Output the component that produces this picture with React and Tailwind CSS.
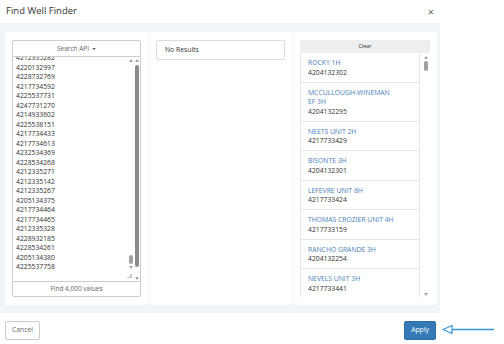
import React from "react";

const apis = [
  "4212335282",
  "4220132997",
  "4228732769",
  "4217734592",
  "4225537731",
  "4247731270",
  "4214933602",
  "4225538151",
  "4217734433",
  "4217734613",
  "4232534369",
  "4228534268",
  "4212335271",
  "4212335142",
  "4212335267",
  "4205134375",
  "4217734464",
  "4217734465",
  "4212335328",
  "4228932185",
  "4228534261",
  "4205134380",
  "4225537758",
];

const wells = [
  { name: "ROCKY 1H", api: "4204132302" },
  { name: "MCCULLOUGH-WINEMAN EF 3H", api: "4204132295" },
  { name: "NEETS UNIT 2H", api: "4217733429" },
  { name: "BISONTE 3H", api: "4204132301" },
  { name: "LEFEVRE UNIT 8H", api: "4217733424" },
  { name: "THOMAS CROZIER UNIT 4H", api: "4217733159" },
  { name: "RANCHO GRANDE 3H", api: "4204132254" },
  { name: "NEVELS UNIT 3H", api: "4217733441" },
];

const UpArrow = () => (
  <div className="w-0 h-0 border-l-[2.5px] border-r-[2.5px] border-b-[3px] border-l-transparent border-r-transparent border-b-[#a3a3a3] mx-auto" />
);
const DownArrow = () => (
  <div className="w-0 h-0 border-l-[2.5px] border-r-[2.5px] border-t-[3px] border-l-transparent border-r-transparent border-t-[#a3a3a3] mx-auto" />
);

const App = () => {
  return (
    <div className="relative w-[504px] h-[344px] bg-white font-['Open_Sans',sans-serif] text-[#333] overflow-hidden">
      {/* header */}
      <div className="w-[440px] h-[23px] flex items-center justify-between pl-[6px] pr-[6px]">
        <span className="text-[9.5px] text-[#333]">Find Well Finder</span>
        <span className="text-[11px] text-[#666] leading-none">×</span>
      </div>

      {/* body */}
      <div className="w-[440px] h-[290px] bg-[#f2f5f8] pt-[9px] pl-[5px] flex gap-[1px]">
        {/* search column */}
        <div className="w-[143px] h-[273px] bg-white rounded-[3px] px-[7px] pt-[8px] pb-[8px] flex flex-col">
          <div className="h-[17px] border border-[#ccc] rounded-t-[2px] flex items-center justify-center gap-[3px] text-[6.5px] text-[#666]">
            Search API
            <span className="w-0 h-0 border-l-[2px] border-r-[2px] border-t-[2.5px] border-l-transparent border-r-transparent border-t-[#666]" />
          </div>
          <div className="relative h-[224px] border-x border-[#ccc] overflow-hidden">
            <div className="-mt-[4px] pl-[3px] text-[6.8px] leading-[9.5px] text-[#333]">
              {apis.map((a, i) => (
                <div key={i}>{a}</div>
              ))}
            </div>
            {/* textarea scrollbar */}
            <div className="absolute right-[7px] top-[2px] w-[5px] h-[210px] flex flex-col items-center">
              <UpArrow />
              <div className="flex-1" />
              <div className="w-[4px] h-[9px] rounded-[2px] bg-[#a0a0a0] mb-[2px]" />
              <DownArrow />
            </div>
            <div className="absolute right-[8px] bottom-[3px] w-[5px] h-[5px] bg-[linear-gradient(135deg,transparent_50%,#ccc_50%)]" />
            {/* outer scrollbar */}
            <div className="absolute right-[1px] top-[2px] w-[5px] h-[221px] flex flex-col items-center">
              <UpArrow />
              <div className="w-[4px] h-[202px] rounded-[2px] bg-[#8a8a8a] mt-[3px]" />
              <div className="flex-1" />
              <DownArrow />
            </div>
          </div>
          <div className="h-[16px] border border-[#ccc] rounded-b-[2px] flex items-center justify-center text-[6.5px] text-[#666]">
            Find 4,000 values
          </div>
        </div>

        {/* results column */}
        <div className="w-[143px] h-[273px] bg-white rounded-[3px] px-[7px] pt-[8px]">
          <div className="h-[20px] border border-[#ddd] rounded-[2px] flex items-center pl-[8px] text-[6.8px] text-[#333]">
            No Results
          </div>
        </div>

        {/* selected wells column */}
        <div className="w-[144px] h-[273px] bg-white rounded-[3px] px-[7px] pt-[8px]">
          <div className="h-[13px] bg-[#eee] flex items-center justify-center text-[5.5px] text-[#333]">
            Clear
          </div>
          <div className="relative h-[244px] overflow-hidden pr-[10px]">
            {wells.map((w, i) => (
              <div
                key={i}
                className="border border-t-0 border-[#e6e6e6] pl-[7px] pr-[4px] pt-[5px] pb-[4.5px] text-[6.8px] leading-[9.5px]"
              >
                <div className="text-[#4a7fb8] max-w-[86px]">{w.name}</div>
                <div className="text-[#333]">{w.api}</div>
              </div>
            ))}
            <div className="absolute right-[1px] top-[3px] w-[6px] h-[240px] flex flex-col items-center">
              <UpArrow />
              <div className="w-[4px] h-[10px] rounded-[2px] bg-[#a0a0a0] mt-[2px]" />
              <div className="flex-1" />
              <DownArrow />
            </div>
          </div>
        </div>
      </div>

      {/* footer */}
      <div className="w-[441px] flex items-center justify-between pl-[5px] pr-[5px] pt-[8px]">
        <button className="h-[19px] px-[6px] border border-[#ccc] rounded-[2px] bg-white text-[6.8px] text-[#666]">
          Cancel
        </button>
        <button className="h-[19px] w-[32px] border border-[#2e6da4] rounded-[2px] bg-[#337ab7] text-[6.8px] text-white">
          Apply
        </button>
      </div>

      {/* pointer arrow */}
      <svg className="absolute left-[440px] top-[323px]" width="56" height="14" viewBox="0 0 56 14">
        <path d="M3 6.5 L12 2.5 L12 10.5 Z" fill="none" stroke="#3b97de" strokeWidth="1.3" strokeLinejoin="round" />
        <line x1="12" y1="6.5" x2="54" y2="6.5" stroke="#3b97de" strokeWidth="1.3" />
      </svg>
    </div>
  );
};

export default App;
